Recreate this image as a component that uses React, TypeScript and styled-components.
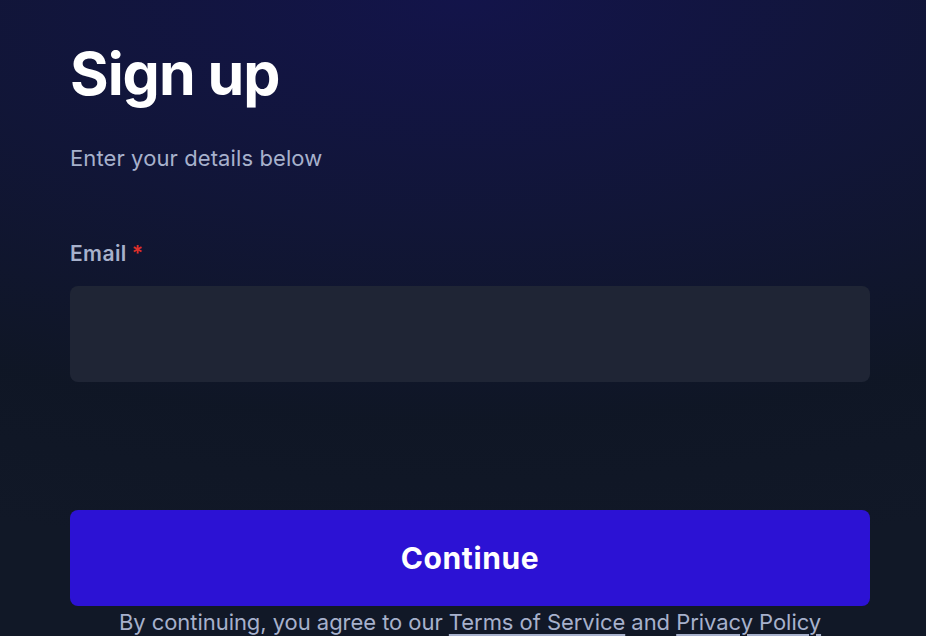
import React from "react";
import styled, { createGlobalStyle } from "styled-components";

const GlobalStyle = createGlobalStyle`
  html, body {
    margin: 0;
    padding: 0;
    background: #111827;
  }
  * {
    box-sizing: border-box;
  }
`;

const Page = styled.div`
  height: 636px;
  overflow: hidden;
  padding: 38px 56px 0 70px;
  font-family: Inter, "Noto Sans", sans-serif;
  background:
    radial-gradient(ellipse 1300px 560px at 50% 0%, rgba(19, 20, 74, 1) 0%, rgba(17, 21, 58, 0.85) 40%, rgba(14, 21, 36, 0.6) 75%, rgba(17, 24, 39, 0) 100%),
    #111827;
`;

const Title = styled.h1`
  margin: 0;
  font-size: 59px;
  line-height: 72px;
  font-weight: 700;
  letter-spacing: -1px;
  color: #ffffff;
`;

const Subtitle = styled.p`
  margin: 34px 0 0;
  font-size: 22px;
  line-height: 28px;
  color: #a7b1cc;
  letter-spacing: 0.1px;
`;

const Form = styled.form`
  display: flex;
  flex-direction: column;
  margin-top: 68px;
`;

const Label = styled.label`
  font-size: 21px;
  line-height: 28px;
  font-weight: 600;
  color: #a7b1cc;
  letter-spacing: 0.4px;
`;

const Required = styled.span`
  color: #e0302a;
  margin-left: 5px;
`;

const Input = styled.input`
  margin-top: 18px;
  height: 96px;
  width: 100%;
  border: none;
  border-radius: 8px;
  background: #1f2535;
  color: #e5e7eb;
  font-size: 20px;
  padding: 0 20px;
  outline: none;
`;

const Button = styled.button`
  margin-top: 128px;
  height: 96px;
  width: 100%;
  border: none;
  border-radius: 8px;
  background: #2c12d4;
  color: #ffffff;
  font-family: Inter, "Noto Sans", sans-serif;
  font-size: 30px;
  font-weight: 700;
  letter-spacing: 0.6px;
  cursor: pointer;
`;

const Legal = styled.p`
  margin: 2px 0 0;
  text-align: center;
  font-size: 22px;
  line-height: 28px;
  color: #a7b1cc;
  letter-spacing: -0.05px;

  a {
    color: #a7b1cc;
    text-decoration: underline;
    text-underline-offset: 4px;
  }
`;

export default function App() {
  return (
    <>
      <GlobalStyle />
      <Page>
        <Title>Sign up</Title>
        <Subtitle>Enter your details below</Subtitle>
        <Form onSubmit={(e) => e.preventDefault()}>
          <Label htmlFor="email">
            Email<Required>*</Required>
          </Label>
          <Input id="email" type="email" />
          <Button type="submit">Continue</Button>
          <Legal>
            By continuing, you agree to our <a href="#">Terms of Service</a> and{" "}
            <a href="#">Privacy Policy</a>
          </Legal>
        </Form>
      </Page>
    </>
  );
}
